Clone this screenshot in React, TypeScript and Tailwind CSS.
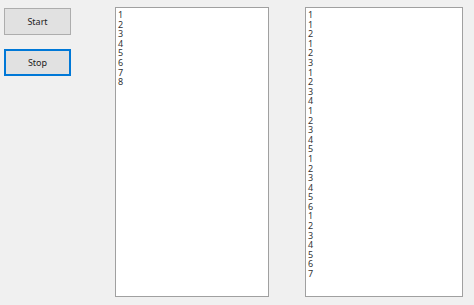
const left = [1, 2, 3, 4, 5, 6, 7, 8];
const right = [1, 1, 2, 1, 2, 3, 1, 2, 3, 4, 1, 2, 3, 4, 5, 1, 2, 3, 4, 5, 6, 1, 2, 3, 4, 5, 6, 7];

function ListBox({ items, width }: { items: number[]; width: string }) {
  return (
    <div className={`${width} h-[290px] bg-white border border-[#a0a0a0] pl-[2px] pt-[2px]`}>
      {items.map((n, i) => (
        <div key={i} className="text-[9px] leading-[9.6px] text-[#333]">
          {n}
        </div>
      ))}
    </div>
  );
}

export default function App() {
  return (
    <div
      className="w-[474px] h-[305px] bg-[#f0f0f0] flex"
      style={{ fontFamily: '"Noto Sans", "Liberation Sans", sans-serif' }}
    >
      <div className="flex flex-col pl-[4px] pt-[8px] gap-[14px]">
        <button className="w-[67px] h-[27px] bg-[#e1e1e1] border border-[#adadad] text-[9px] text-[#222]">
          Start
        </button>
        <button className="w-[67px] h-[27px] bg-[#e1e1e1] border-2 border-[#0078d7] text-[9px] text-[#222]">
          Stop
        </button>
      </div>
      <div className="ml-[44px] mt-[7px]">
        <ListBox items={left} width="w-[154px]" />
      </div>
      <div className="ml-[36px] mt-[7px]">
        <ListBox items={right} width="w-[158px]" />
      </div>
    </div>
  );
}
